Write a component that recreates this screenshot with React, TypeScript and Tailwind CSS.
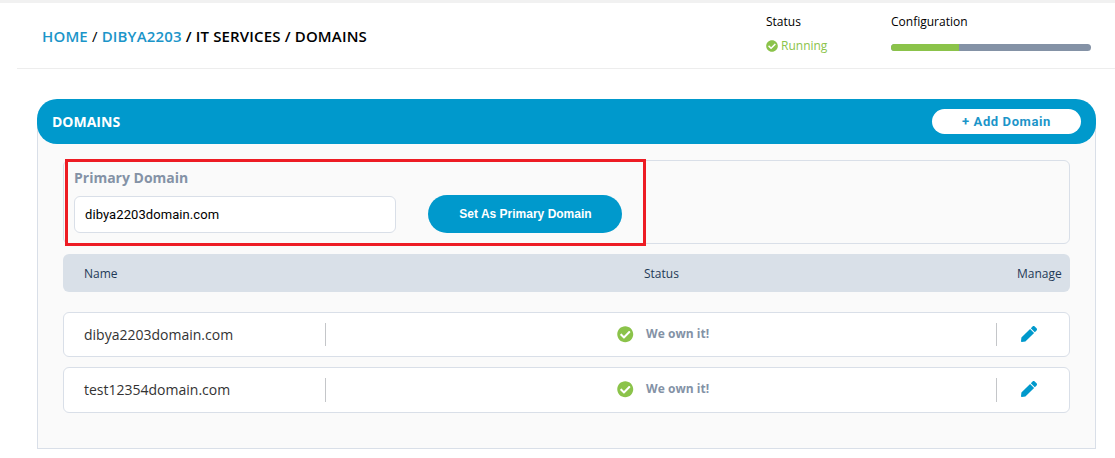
import { FaCheckCircle, FaPen } from "react-icons/fa";

const rows = [
  { name: "dibya2203domain.com", box: "h-[45px]" },
  { name: "test12354domain.com", box: "h-[46px]" },
];

function DomainRow({ name, box }: { name: string; box: string }) {
  return (
    <div className={`flex rounded-[6px] border border-[#d9dfe8] bg-white py-[10px] ${box}`}>
      <div className="w-[262px] border-r border-[#c4c6c9] pl-5 text-[14px] leading-[24px] text-[#333]">
        <span>{name}</span>
      </div>
      <div className="flex w-[671px] border-r border-[#c4c6c9] pl-[291px]">
        <FaCheckCircle className="mt-[3px] size-[16.5px] text-[#8bc34a]" />
        <span className="ml-[12.5px] text-[12px] leading-[21px] font-bold tracking-[0.04px] text-[#8492a6]">We own it!</span>
      </div>
      <FaPen className="mt-[3px] ml-6 size-4 text-[#0099cc]" />
    </div>
  );
}

export default function App() {
  return (
    <div className="h-[458px] w-[1115px] overflow-hidden border-t-[3px] border-[#f1f1f1] bg-white font-['Open_Sans',sans-serif]">
      <header className="ml-[17px] flex h-[66px] border-b border-[#ededed] pl-[25px]">
        <nav className="w-[724px] pt-[22px] text-[15px] leading-[22px] font-semibold tracking-[0.155px] whitespace-pre text-black">
          <span className="text-[#1b95c9]">HOME</span>
          <span className="font-normal"> / </span>
          <span className="text-[#1b95c9]">DIBYA2203</span>
          <span> / IT SERVICES / DOMAINS</span>
        </nav>
        <div className="w-[125px] pt-[10px] text-[12px] leading-[18px]">
          <div>Status</div>
          <div className="mt-[6px] flex items-center text-[#8bc34a]">
            <FaCheckCircle className="mr-[3px] size-3" />
            <span>Running</span>
          </div>
        </div>
        <div className="pt-[10px] text-[12px] leading-[18px]">
          <div>Configuration</div>
          <div className="mt-[13px] h-[7px] w-[200px] overflow-hidden rounded-full bg-[#8492a6]">
            <div className="h-full w-[68px] bg-[#8bc34a]" />
          </div>
        </div>
      </header>
      <main className="mt-[30px] ml-[37px] w-[1059px]">
        <div className="relative flex h-[45px] items-center justify-between rounded-[20px] bg-[#0099cc] pr-[15px] pl-[15px]">
          <h2 className="text-[14px] font-bold text-white">DOMAINS</h2>
          <button className="h-[25px] w-[149px] rounded-full bg-white font-['Roboto',sans-serif] text-[13px] font-bold tracking-[0.6px] text-[#1b95c9]">
            + Add Domain
          </button>
        </div>
        <section className="-mt-[20px] h-[325px] border border-t-0 border-[#d9dfe8] bg-[#fafafa] px-[25px] pt-[36px]">
          <div className="relative h-[84px] rounded-[6px] border border-[#d9dfe8] pt-[7px] pl-[10px]">
            <div className="absolute -top-[2px] left-[1px] h-[87px] w-[581px] border-[3px] border-[#ed1c24]" />
            <div className="text-[14px] leading-[20px] font-bold text-[#8492a6]">Primary Domain</div>
            <div className="mt-[7px] flex">
              <div className="mt-px h-[37px] w-[322px] rounded-[6px] border border-[#d9dfe8] bg-white pl-[10px] font-['Roboto',sans-serif] text-[13px] leading-[35px] tracking-[0.08px] text-black">
                <span>dibya2203domain.com</span>
              </div>
              <button className="ml-8 h-[38px] w-[194px] rounded-full bg-[#0099cc] pl-px font-['Liberation_Sans',sans-serif] text-[12px] font-bold text-white">
                Set As Primary Domain
              </button>
            </div>
          </div>
          <div className="mt-[10px] flex h-[38px] items-center rounded-[6px] bg-[#d9e0e8] pt-[2px] pl-[21px] text-[12px] text-[#1f3a57]">
            <span className="w-[560px]">Name</span>
            <span className="w-[373px]">Status</span>
            <span>Manage</span>
          </div>
          <div className="mt-5 flex flex-col gap-[10px]">
            {rows.map((row) => (
              <DomainRow key={row.name} {...row} />
            ))}
          </div>
        </section>
      </main>
    </div>
  );
}
